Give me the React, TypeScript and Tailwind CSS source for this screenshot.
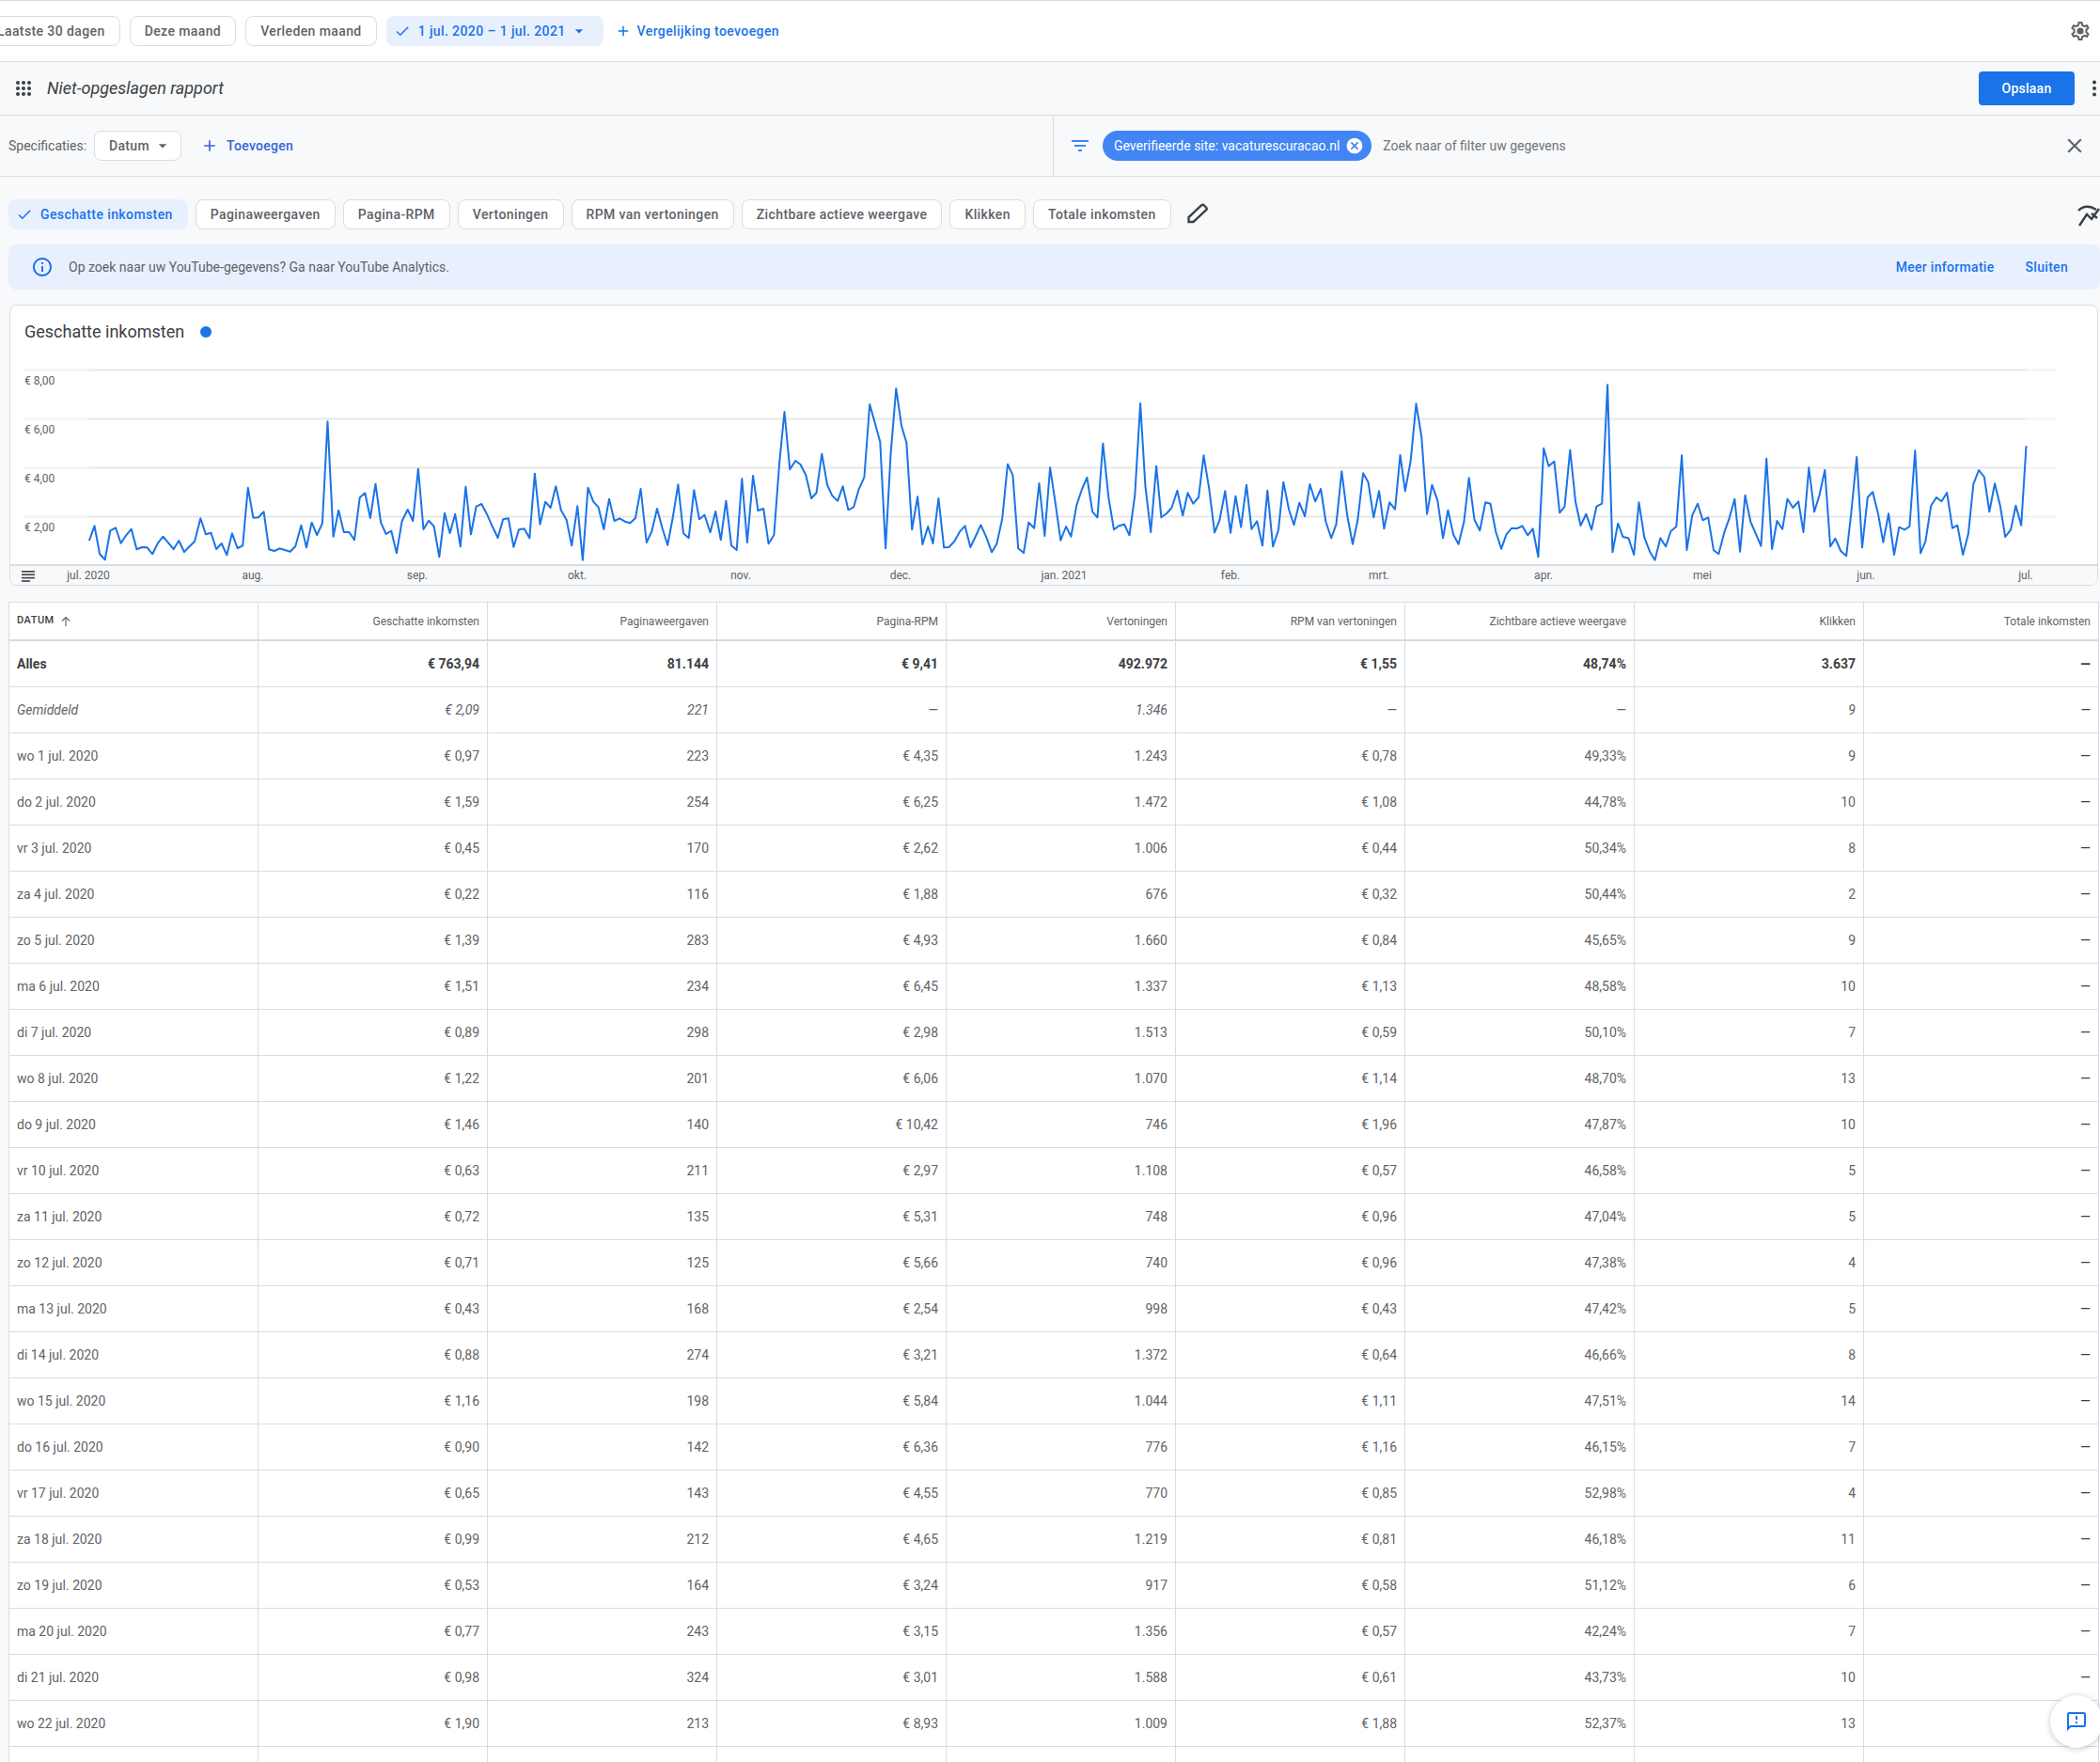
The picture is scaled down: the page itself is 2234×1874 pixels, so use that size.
import React from 'react';

// traced from the chart, [x, y] in the scale of each crop
const SEG_A: number[][] = [[186,765],[197,718],[208,808],[219,826],[230,733],[241,724],[252,773],[263,748],[274,728],[285,793],[296,786],[307,787],[318,808],[329,773],[340,752],[351,772],[362,792],[373,765],[384,801],[395,784],[406,767],[418,694],[429,745],[440,740],[451,792],[462,774],[473,811],[484,742],[495,789],[506,781],[517,596],[528,692],[539,691],[550,673],[561,793],[572,798],[583,790],[594,795],[605,800],[616,783],[628,716],[639,787],[650,707],[661,747],[672,710],[683,385],[695,752],[706,668],[717,738],[728,738],[739,763],[750,628],[761,613],[772,693],[783,584],[794,707],[805,744],[816,734],[827,805],[838,703],[850,666],[861,702],[872,536],[883,729],[894,701],[905,720],[916,817],[927,677],[938,741],[949,680],[960,784],[971,593],[982,745],[993,656],[1004,648],[1015,680],[1026,718],[1038,756],[1049,697],[1060,694],[1071,785],[1082,730],[1093,727],[1104,757],[1115,551],[1126,713],[1137,641],[1148,660],[1159,592],[1170,668],[1181,698],[1192,781],[1204,655],[1215,827],[1226,596],[1237,640],[1248,659],[1259,729],[1270,632],[1281,702],[1292,694],[1303,704],[1314,709],[1325,693],[1336,600],[1348,771],[1359,735],[1370,663],[1381,725],[1392,779],[1403,690],[1414,586],[1425,742],[1436,757],[1447,604],[1458,697],[1469,683],[1481,739],[1492,672],[1503,763],[1514,638],[1525,781],[1536,795],[1547,567],[1558,771]];
const SEG_B: number[][] = [[126,408],[137,519],[149,513],[160,625],[172,597],[184,365],[195,204],[207,388],[219,360],[230,372],[242,406],[254,480],[265,463],[277,338],[289,438],[300,472],[312,488],[323,442],[335,517],[347,508],[358,452],[370,413],[382,180],[393,237],[405,300],[417,640],[428,340],[440,130],[452,250],[463,303],[475,580],[487,475],[498,627],[510,570],[521,624],[533,480],[545,637],[556,636],[568,617],[580,586],[591,568],[603,636],[614,603],[626,565],[638,604],[650,652],[661,625],[673,545],[685,371],[696,406],[708,640],[720,654],[731,557],[743,575],[754,432],[766,600],[778,382],[789,490],[801,614],[813,570],[824,602],[836,503],[848,450],[859,414],[871,523],[882,541],[894,305],[906,475],[918,580],[929,568],[941,563],[952,598],[964,470],[976,177],[987,440],[999,588],[1011,377],[1022,541],[1034,528],[1045,510],[1057,455],[1069,535],[1080,463],[1092,497],[1104,477],[1115,343],[1127,450],[1139,589],[1150,550],[1162,457],[1174,590],[1185,473],[1197,572],[1209,437],[1220,578],[1232,553],[1244,631],[1255,455],[1267,634],[1279,581],[1290,428],[1302,515],[1313,565],[1325,494],[1337,537],[1348,435],[1360,490],[1372,450],[1383,555],[1395,607],[1406,563],[1418,394],[1430,535],[1442,626],[1453,550],[1465,400],[1476,428],[1488,541],[1500,457],[1511,577],[1523,493],[1535,515]];
const SEG_C: number[][] = [[32,342],[43,457],[55,360],[67,178],[79,285],[91,530],[102,437],[114,487],[126,607],[137,518],[149,596],[160,626],[172,555],[183,415],[195,548],[207,583],[219,493],[230,497],[242,587],[254,641],[265,595],[277,575],[289,576],[300,568],[312,598],[323,577],[335,667],[347,320],[358,377],[370,362],[382,526],[393,506],[405,326],[417,492],[428,567],[440,530],[452,580],[463,506],[475,497],[487,118],[498,652],[510,560],[521,603],[533,607],[545,660],[556,493],[568,605],[580,650],[591,677],[603,607],[615,634],[626,585],[638,570],[650,343],[661,645],[673,535],[685,497],[696,550],[708,541],[720,646],[731,658],[743,590],[754,545],[766,482],[778,650],[789,470],[801,555],[813,595],[824,632],[836,353],[848,642],[859,552],[871,578],[882,482],[894,510],[906,490],[917,588],[929,382],[941,523],[952,470],[964,390],[976,634],[987,608],[999,648],[1011,664],[1022,525],[1034,348],[1046,637],[1058,477],[1069,460],[1081,530],[1092,620],[1104,529],[1116,660],[1127,572],[1139,580],[1150,570],[1162,328],[1174,655],[1185,617],[1197,504],[1209,477],[1220,490],[1232,462],[1244,575],[1255,566],[1267,660],[1279,592],[1290,435],[1302,390],[1314,412],[1325,523],[1337,433],[1349,505],[1360,603],[1372,580],[1383,503],[1395,566],[1406,313]];

const linePoints = [
  ...SEG_A.map(([x, y]) => [x / 1.96, 320 + y / 3]),
  ...SEG_B.map(([x, y]) => [740 + x / 2.063, 370 + y / 3]),
  ...SEG_C.map(([x, y]) => [1474 + x / 2.063, 370 + y / 3]),
]
  .map(([x, y]) => `${x.toFixed(1)},${y.toFixed(1)}`)
  .join(' ');

const COLUMNS = ['Geschatte inkomsten', 'Paginaweergaven', 'Pagina-RPM', 'Vertoningen', 'RPM van vertoningen', 'Zichtbare actieve weergave', 'Klikken', 'Totale inkomsten'];

const ROWS: string[][] = [
  ['wo 1 jul. 2020', '€ 0,97', '223', '€ 4,35', '1.243', '€ 0,78', '49,33%', '9'],
  ['do 2 jul. 2020', '€ 1,59', '254', '€ 6,25', '1.472', '€ 1,08', '44,78%', '10'],
  ['vr 3 jul. 2020', '€ 0,45', '170', '€ 2,62', '1.006', '€ 0,44', '50,34%', '8'],
  ['za 4 jul. 2020', '€ 0,22', '116', '€ 1,88', '676', '€ 0,32', '50,44%', '2'],
  ['zo 5 jul. 2020', '€ 1,39', '283', '€ 4,93', '1.660', '€ 0,84', '45,65%', '9'],
  ['ma 6 jul. 2020', '€ 1,51', '234', '€ 6,45', '1.337', '€ 1,13', '48,58%', '10'],
  ['di 7 jul. 2020', '€ 0,89', '298', '€ 2,98', '1.513', '€ 0,59', '50,10%', '7'],
  ['wo 8 jul. 2020', '€ 1,22', '201', '€ 6,06', '1.070', '€ 1,14', '48,70%', '13'],
  ['do 9 jul. 2020', '€ 1,46', '140', '€ 10,42', '746', '€ 1,96', '47,87%', '10'],
  ['vr 10 jul. 2020', '€ 0,63', '211', '€ 2,97', '1.108', '€ 0,57', '46,58%', '5'],
  ['za 11 jul. 2020', '€ 0,72', '135', '€ 5,31', '748', '€ 0,96', '47,04%', '5'],
  ['zo 12 jul. 2020', '€ 0,71', '125', '€ 5,66', '740', '€ 0,96', '47,38%', '4'],
  ['ma 13 jul. 2020', '€ 0,43', '168', '€ 2,54', '998', '€ 0,43', '47,42%', '5'],
  ['di 14 jul. 2020', '€ 0,88', '274', '€ 3,21', '1.372', '€ 0,64', '46,66%', '8'],
  ['wo 15 jul. 2020', '€ 1,16', '198', '€ 5,84', '1.044', '€ 1,11', '47,51%', '14'],
  ['do 16 jul. 2020', '€ 0,90', '142', '€ 6,36', '776', '€ 1,16', '46,15%', '7'],
  ['vr 17 jul. 2020', '€ 0,65', '143', '€ 4,55', '770', '€ 0,85', '52,98%', '4'],
  ['za 18 jul. 2020', '€ 0,99', '212', '€ 4,65', '1.219', '€ 0,81', '46,18%', '11'],
  ['zo 19 jul. 2020', '€ 0,53', '164', '€ 3,24', '917', '€ 0,58', '51,12%', '6'],
  ['ma 20 jul. 2020', '€ 0,77', '243', '€ 3,15', '1.356', '€ 0,57', '42,24%', '7'],
  ['di 21 jul. 2020', '€ 0,98', '324', '€ 3,01', '1.588', '€ 0,61', '43,73%', '10'],
  ['wo 22 jul. 2020', '€ 1,90', '213', '€ 8,93', '1.009', '€ 1,88', '52,37%', '13'],
];

const X_LABELS = [
  { text: 'jul. 2020', cls: 'left-[83px]' },
  { text: 'aug.', cls: 'left-[258px]' },
  { text: 'sep.', cls: 'left-[433px]' },
  { text: 'okt.', cls: 'left-[603px]' },
  { text: 'nov.', cls: 'left-[777px]' },
  { text: 'dec.', cls: 'left-[947px]' },
  { text: 'jan. 2021', cls: 'left-[1121px]' },
  { text: 'feb.', cls: 'left-[1298px]' },
  { text: 'mrt.', cls: 'left-[1456px]' },
  { text: 'apr.', cls: 'left-[1631px]' },
  { text: 'mei', cls: 'left-[1800px]' },
  { text: 'jun.', cls: 'left-[1974px]' },
  { text: 'jul.', cls: 'left-[2144px]' },
];

const Y_LABELS = [
  { text: '€ 8,00', cls: 'top-[5px]' },
  { text: '€ 6,00', cls: 'top-[57px]' },
  { text: '€ 4,00', cls: 'top-[109px]' },
  { text: '€ 2,00', cls: 'top-[161px]' },
];

const GRID_ROWS = 'grid grid-cols-[264px_repeat(7,244px)_1fr]';

function Icon({ d, className }: { d: string; className?: string }) {
  return (
    <svg viewBox="0 0 24 24" fill="currentColor" className={className}>
      <path d={d} />
    </svg>
  );
}

const CHECK = 'M9 16.17L4.83 12l-1.42 1.41L9 19 21 7l-1.41-1.41z';
const PLUS = 'M19 13h-6v6h-2v-6H5v-2h6V5h2v6h6v2z';
const ARROW = 'M7 10l5 5 5-5z';

function Chip({ children, active }: { children: React.ReactNode; active?: boolean }) {
  return (
    <div
      className={
        active
          ? 'flex h-8 items-center rounded-lg bg-[#e8f0fe] text-[#1a73e8] pl-2 pr-4 text-sm font-medium tracking-[0.4px]'
          : 'flex h-8 items-center rounded-lg border border-[#dadce0] bg-white px-[15px] text-sm font-medium text-[#5f6368] tracking-[0.4px]'
      }
    >
      {children}
    </div>
  );
}

export default function App() {
  return (
    <div className="relative h-[1874px] w-[2234px] overflow-hidden bg-[#f8f9fa] font-[Roboto,sans-serif] text-[#3c4043]">
      <div className="flex h-[66px] items-center border-y border-[#dadce0] bg-white pr-[9px]">
        <div className="-ml-[19px] flex items-center gap-[10px]">
          <Chip>Laatste 30 dagen</Chip>
          <Chip>Deze maand</Chip>
          <Chip>Verleden maand</Chip>
          <Chip active>
            <Icon d={CHECK} className="mr-2 h-[18px] w-[18px]" />
            1 jul. 2020 – 1 jul. 2021
            <Icon d={ARROW} className="ml-1 h-5 w-5" />
          </Chip>
        </div>
        <div className="ml-[12px] flex items-center text-sm font-medium tracking-[0.4px] text-[#1a73e8]">
          <Icon d={PLUS} className="mr-[6px] h-[18px] w-[18px]" />
          Vergelijking toevoegen
        </div>
        <svg viewBox="0 0 24 24" fill="#5f6368" className="ml-auto h-6 w-6">
          <path d="M19.43 12.98c.04-.32.07-.64.07-.98 0-.34-.03-.66-.07-.98l2.11-1.65c.19-.15.24-.42.12-.64l-2-3.46c-.09-.16-.26-.25-.44-.25-.06 0-.12.01-.17.03l-2.49 1c-.52-.4-1.08-.73-1.69-.98l-.38-2.65C14.46 2.18 14.25 2 14 2h-4c-.25 0-.46.18-.49.42l-.38 2.65c-.61.25-1.17.59-1.69.98l-2.49-1c-.06-.02-.12-.03-.18-.03-.17 0-.34.09-.43.25l-2 3.46c-.13.22-.07.49.12.64l2.11 1.65c-.04.32-.07.65-.07.98 0 .33.03.66.07.98l-2.11 1.65c-.19.15-.24.42-.12.64l2 3.46c.09.16.26.25.44.25.06 0 .12-.01.17-.03l2.49-1c.52.4 1.08.73 1.69.98l.38 2.65c.03.24.24.42.49.42h4c.25 0 .46-.18.49-.42l.38-2.65c.61-.25 1.17-.59 1.69-.98l2.49 1c.06.02.12.03.18.03.17 0 .34-.09.43-.25l2-3.46c.12-.22.07-.49-.12-.64l-2.11-1.65zm-1.98-1.71c.04.31.05.52.05.73 0 .21-.02.43-.05.73l-.14 1.13.89.7 1.08.84-.7 1.21-1.27-.51-1.04-.42-.9.68c-.43.32-.84.56-1.25.73l-1.06.43-.16 1.13-.2 1.35h-1.4l-.19-1.35-.16-1.13-1.06-.43c-.43-.18-.83-.41-1.23-.71l-.91-.7-1.06.43-1.27.51-.7-1.21 1.08-.84.89-.7-.14-1.13c-.03-.31-.05-.54-.05-.74s.02-.43.05-.73l.14-1.13-.89-.7-1.08-.84.7-1.21 1.27.51 1.04.42.9-.68c.43-.32.84-.56 1.25-.73l1.06-.43.16-1.13.2-1.35h1.39l.19 1.35.16 1.13 1.06.43c.43.18.83.41 1.23.71l.91.7 1.06-.43 1.27-.51.7 1.21-1.07.85-.89.7.14 1.13z" />
          <circle cx="12" cy="12" r="3.6" />
        </svg>
      </div>

      <div className="flex h-[57px] items-center border-b border-[#dadce0] pl-[17px] pr-[3px]">
        <svg viewBox="0 0 16 16" fill="#3c4043" className="h-4 w-4">
          <circle cx="2" cy="2" r="2" /><circle cx="8" cy="2" r="2" /><circle cx="14" cy="2" r="2" />
          <circle cx="2" cy="8" r="2" /><circle cx="8" cy="8" r="2" /><circle cx="14" cy="8" r="2" />
          <circle cx="2" cy="14" r="2" /><circle cx="8" cy="14" r="2" /><circle cx="14" cy="14" r="2" />
        </svg>
        <span className="ml-[17px] text-lg italic text-[#3c4043]">Niet-opgeslagen rapport</span>
        <button className="ml-auto h-9 w-[102px] rounded bg-[#1a73e8] text-sm font-medium tracking-[0.25px] text-white">Opslaan</button>
        <svg viewBox="0 0 6 18" fill="#3c4043" className="ml-[18px] h-[18px] w-[6px]">
          <circle cx="3" cy="2.5" r="2" /><circle cx="3" cy="9" r="2" /><circle cx="3" cy="15.5" r="2" />
        </svg>
      </div>

      <div className="flex h-[65px] border-b border-[#dadce0]">
        <div className="flex w-[1121px] items-center border-r border-[#dadce0] pl-[9px]">
          <span className="text-sm text-[#5f6368]">Specificaties:</span>
          <div className="ml-2 flex h-8 w-[93px] items-center rounded-lg border border-[#dadce0] bg-white pl-[15px] text-sm font-medium text-[#5f6368] tracking-[0.3px]">
            Datum
            <Icon d={ARROW} className="ml-1 h-5 w-5" />
          </div>
          <Icon d={PLUS} className="ml-5 h-5 w-5 text-[#3367d6]" />
          <span className="ml-2 text-sm font-medium tracking-[0.3px] text-[#3367d6]">Toevoegen</span>
        </div>
        <div className="flex flex-1 items-center pl-4 pr-[14px]">
          <Icon d="M10 18h4v-2h-4v2zM3 6v2h18V6H3zm3 7h12v-2H6v2z" className="h-6 w-6 text-[#4285f4]" />
          <div className="ml-[12px] flex h-8 items-center rounded-2xl bg-[#4285f4] pl-3 pr-2 text-sm text-white">
            Geverifieerde site: vacaturescuracao.nl
            <Icon d="M12 2C6.47 2 2 6.47 2 12s4.47 10 10 10 10-4.47 10-10S17.53 2 12 2zm5 13.59L15.59 17 12 13.41 8.41 17 7 15.59 10.59 12 7 8.41 8.41 7 12 10.59 15.59 7 17 8.41 13.41 12 17 15.59z" className="ml-[6px] h-5 w-5" />
          </div>
          <span className="ml-3 text-sm text-[#70757a]">Zoek naar of filter uw gegevens</span>
          <Icon d="M19 6.41L17.59 5 12 10.59 6.41 5 5 6.41 10.59 12 5 17.59 6.41 19 12 13.41 17.59 19 19 17.59 13.41 12z" className="ml-auto h-[26px] w-[26px] text-[#5f6368]" />
        </div>
      </div>

      <div className="flex items-center pl-[9px] pt-6">
        <div className="flex items-center gap-2">
          <Chip active>
            <Icon d={CHECK} className="mr-2 h-[18px] w-[18px]" />
            Geschatte inkomsten
          </Chip>
          {COLUMNS.slice(1).map((c) => (
            <Chip key={c}>{c}</Chip>
          ))}
        </div>
        <svg viewBox="8 12 24 24" fill="none" stroke="#3c4043" strokeWidth="2.4" className="ml-4 h-6 w-6">
          <path d="M10.5 32v-5L24 14.5c1-1 2-1 3 0l2 2c1 1 1 2 0 3L15.5 32z" />
        </svg>
        <svg viewBox="20 10 24 30" fill="none" stroke="#3c4043" strokeWidth="2.4" className="ml-auto h-[30px] w-6">
          <path d="M21 21Q29 13 40 20M22 37l8-12 5 5 8-11M35 24l6 5" />
        </svg>
      </div>

      <div className="ml-[9px] mt-4 flex h-12 items-center rounded-l-lg rounded-r-lg bg-[#e8f0fe] pl-6 pr-[34px] text-sm">
        <Icon d="M11 7h2v2h-2zm0 4h2v6h-2zm1-9C6.48 2 2 6.48 2 12s4.48 10 10 10 10-4.48 10-10S17.52 2 12 2zm0 18c-4.41 0-8-3.59-8-8s3.59-8 8-8 8 3.59 8 8-3.59 8-8 8z" className="h-6 w-6 text-[#1a73e8]" />
        <span className="ml-4 text-[#5f6368]">Op zoek naar uw YouTube-gegevens? Ga naar YouTube Analytics.</span>
        <span className="ml-auto font-medium tracking-[0.3px] text-[#1a73e8]">Meer informatie</span>
        <span className="ml-[33px] font-medium tracking-[0.3px] text-[#1a73e8]">Sluiten</span>
      </div>

      <div className="ml-[10px] mr-[2px] mt-4 h-[299px] overflow-hidden rounded-lg border border-[#dadce0] bg-white">
        <div className="flex h-[67px] items-start pl-[15px] pt-[15px]">
          <span className="text-lg leading-[26px] text-[#3c4043]">Geschatte inkomsten</span>
          <span className="ml-[17px] mt-[7px] h-3 w-3 rounded-full bg-[#1a73e8]" />
        </div>
        <div className="relative h-[210px]">
          <svg viewBox="11 392 2220 210" className="block h-[210px] w-[2220px]">
            {[393.5, 445.5, 497.5, 549.5].map((y) => (
              <g key={y} strokeWidth="2">
                <line x1="26" x2="95" y1={y} y2={y} stroke="#f1f3f4" />
                <line x1="95" x2="2156" y1={y} y2={y} stroke="#e8e8e8" />
                <line x1="2156" x2="2188" y1={y} y2={y} stroke="#f1f3f4" />
              </g>
            ))}
            <line x1="11" x2="2231" y1="601" y2="601" stroke="#dadce0" strokeWidth="2" />
            <polyline points={linePoints} fill="none" stroke="#1a73e8" strokeWidth="2" strokeLinejoin="round" />
          </svg>
          {Y_LABELS.map((l) => (
            <span key={l.text} className={`absolute left-[15px] text-xs leading-4 text-[#5f6368] ${l.cls}`}>{l.text}</span>
          ))}
        </div>
        <div className="relative flex h-[21px] items-center bg-[#f8f9fa] pl-3">
          <svg viewBox="0 0 14 12" fill="#3c4043" className="h-3 w-[14px]">
            <rect y="0" width="14" height="1.6" /><rect y="3.4" width="14" height="1.6" /><rect y="6.8" width="14" height="1.6" /><rect y="10.2" width="9" height="1.6" />
          </svg>
          {X_LABELS.map((l) => (
            <span key={l.text} className={`absolute top-[2px] -translate-x-1/2 text-xs leading-4 text-[#5f6368] ${l.cls}`}>{l.text}</span>
          ))}
        </div>
      </div>

      <div className="ml-[9px] mr-px mt-[17px] border-l border-r border-t border-[#dadce0] bg-white text-sm text-[#5f6368]">
        <div className={`${GRID_ROWS} h-[41px] items-stretch border-b-2 border-[#dadce0] text-xs`}>
          <div className="flex items-center pl-2 text-[11px] font-medium uppercase tracking-[0.5px] text-[#3c4043]">
            Datum
            <svg viewBox="0 0 12 12" fill="none" stroke="#5f6368" strokeWidth="1.1" className="ml-[6px] h-3 w-3"><path d="M6 11V1.5M2 5.5l4-4 4 4" /></svg>
          </div>
          {COLUMNS.map((c) => (
            <div key={c} className="flex items-center justify-end border-l border-[#dadce0] pr-2">{c}</div>
          ))}
        </div>
        <TableRow cells={['Alles', '€ 763,94', '81.144', '€ 9,41', '492.972', '€ 1,55', '48,74%', '3.637']} cls="font-bold text-[#3c4043]" />
        <TableRow cells={['Gemiddeld', '€ 2,09', '221', '—', '1.346', '—', '—', '9']} cls="italic" />
        {ROWS.map((r) => (
          <TableRow key={r[0]} cells={r} />
        ))}
        <TableRow cells={['', '', '', '', '', '', '', '']} blank />
      </div>

      <div className="absolute left-[2181px] top-[1803px] flex h-14 w-14 items-center justify-center rounded-full bg-white shadow-[0_1px_6px_rgba(60,64,67,0.3)]">
        <Icon d="M20 2H4c-1.1 0-2 .9-2 2v18l4-4h14c1.1 0 2-.9 2-2V4c0-1.1-.9-2-2-2zm0 14H5.17L4 17.17V4h16v12zM11 12h2v2h-2zm0-6h2v4h-2z" className="h-6 w-6 text-[#1a73e8]" />
      </div>
    </div>
  );
}

function TableRow({ cells, cls, blank }: { cells: string[]; cls?: string; blank?: boolean }) {
  return (
    <div className={`${GRID_ROWS} h-[49px] border-b border-[#dadce0] ${cls ?? ''}`}>
      <div className="flex items-center pl-2">{cells[0]}</div>
      {cells.slice(1).map((c, i) => (
        <div key={i} className="flex items-center justify-end border-l border-[#dadce0] pr-2">{c}</div>
      ))}
      <div className="flex items-center justify-end border-l border-[#dadce0] pr-2 text-[#3c4043]">{blank ? '' : '—'}</div>
    </div>
  );
}
